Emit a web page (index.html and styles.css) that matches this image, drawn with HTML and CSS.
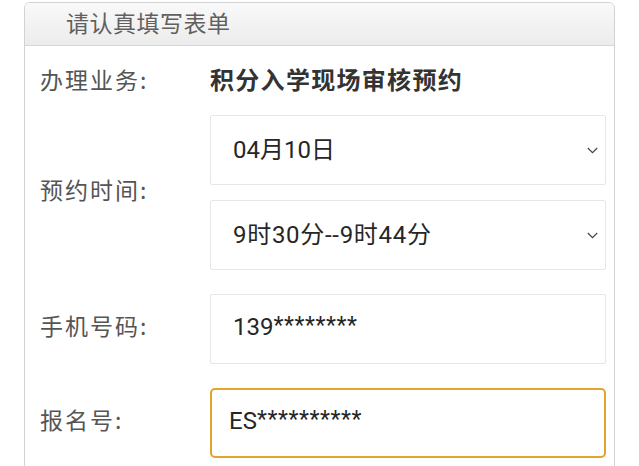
FILE: index.html
```html
<!DOCTYPE html>
<html lang="zh-CN">
<head>
<meta charset="utf-8">
<title>请认真填写表单</title>
<link rel="stylesheet" href="styles.css">
</head>
<body>
<div class="card">
  <div class="card-head">请认真填写表单</div>
  <div class="card-body">
    <div class="row row-biz">
      <div class="label">办理业务:</div>
      <div class="value">积分入学现场审核预约</div>
    </div>
    <div class="row row-time">
      <div class="label">预约时间:</div>
      <div class="fields">
        <div class="box select"><span>04月10日</span>
          <svg class="chev" width="11" height="7" viewBox="0 0 11 7"><path d="M0.8 1 L5.5 5.6 L10.2 1" fill="none" stroke="#444" stroke-width="1.2"/></svg>
        </div>
        <div class="box select"><span class="range">9时30分--9时44分</span>
          <svg class="chev" width="11" height="7" viewBox="0 0 11 7"><path d="M0.8 1 L5.5 5.6 L10.2 1" fill="none" stroke="#444" stroke-width="1.2"/></svg>
        </div>
      </div>
    </div>
    <div class="row row-input">
      <div class="label">手机号码:</div>
      <div class="fields"><div class="box"><span>139<small>********</small></span></div></div>
    </div>
    <div class="row row-input">
      <div class="label">报名号:</div>
      <div class="fields"><div class="box focus"><span>ES<small>**********</small></span></div></div>
    </div>
  </div>
</div>
</body>
</html>
```

FILE: styles.css
```css
html, body {
  margin: 0;
  padding: 0;
  background: #ffffff;
}
body {
  font-family: "Noto Sans CJK SC", "Noto Sans", sans-serif;
  width: 639px;
  height: 466px;
  overflow: hidden;
}
.card {
  margin: 2px 0 0 24px;
  width: 591px;
  height: 480px;
  border: 1px solid #d2d2d2;
  border-radius: 6px;
  overflow: hidden;
  box-sizing: border-box;
}
.card-head {
  height: 43px;
  box-sizing: border-box;
  border-bottom: 1px solid #d6d6d6;
  background: linear-gradient(#f9f9f9, #ececec);
  padding-left: 41px;
  font-size: 23px;
  line-height: 38px;
  color: #606060;
  letter-spacing: 0.5px;
}
.card-body {
  padding: 0 8px 0 15px;
  display: flex;
  flex-direction: column;
}
.row {
  display: flex;
  align-items: center;
}
.label {
  width: 170px;
  flex: none;
  font-size: 23px;
  color: #555;
  letter-spacing: 2px;
  padding-bottom: 8px;
}
.row-biz {
  height: 69px;
}
.row-biz .label {
  padding-bottom: 4px;
}
.value {
  font-size: 24px;
  font-weight: 700;
  color: #333;
  letter-spacing: 1.3px;
  padding-bottom: 4px;
}
.fields {
  flex: 1;
  display: flex;
  flex-direction: column;
  gap: 15px;
}
.row-input {
  margin-top: 24px;
}
.box {
  height: 70px;
  box-sizing: border-box;
  border: 1px solid #e6e6e6;
  border-radius: 2px;
  display: flex;
  align-items: center;
  padding: 0 7px 0 22px;
  font-family: Roboto, "Noto Sans CJK SC", sans-serif;
  font-size: 24px;
  color: #262626;
}
.box span {
  flex: 1;
  padding-bottom: 6px;
}
.box .range {
  letter-spacing: 0.7px;
}
.box small {
  font-size: 23px;
  letter-spacing: 0.6px;
  vertical-align: 2px;
}
.chev {
  flex: none;
}
.focus {
  border: 2px solid #e2a42c;
  border-radius: 5px;
  padding-left: 17px;
}
```
